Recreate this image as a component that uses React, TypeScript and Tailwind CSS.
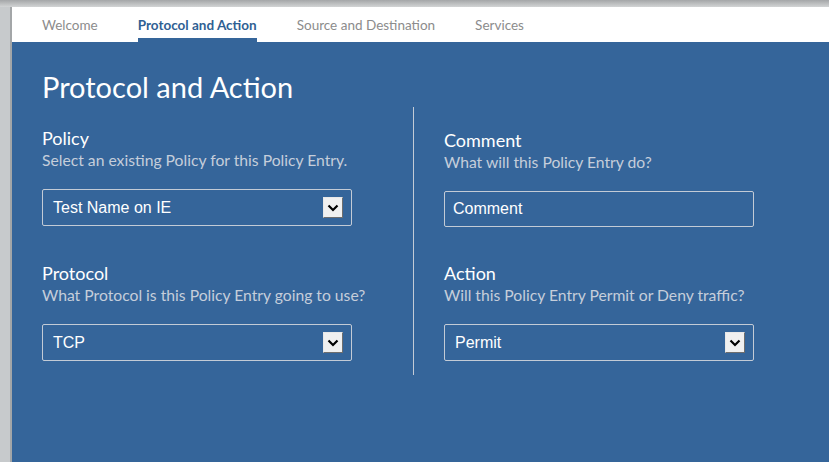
import React from "react";

const Arrow = () => (
    <div className="flex w-[20px] h-[21px] items-center justify-center bg-[#f0f0f0] border border-t-[#e8e8e8] border-l-[#e8e8e8] border-r-[#6e6e6e] border-b-[#6e6e6e]">
        <svg width="12" height="8" viewBox="0 0 12 8">
            <path d="M1.5 1.5 L6 6 L10.5 1.5" fill="none" stroke="#000" strokeWidth="2.2" />
        </svg>
    </div>
);

const Select = ({ value }: { value: string }) => (
    <div className="flex w-[310px] h-[37px] items-center justify-between pl-[10px] pr-[8px] border border-[#c3cbd6] rounded-[2px] text-white text-[16px] font-['Liberation_Sans',sans-serif]">
        <span>{value}</span>
        <Arrow />
    </div>
);

const Input = ({ value }: { value: string }) => (
    <div className="flex w-[310px] h-[36px] items-center pl-[8px] border border-[#c3cbd6] rounded-[2px] text-white text-[16px] font-['Liberation_Sans',sans-serif]">
        <span>{value}</span>
    </div>
);

const Field = ({ label, hint, children }: { label: string; hint: string; children: React.ReactNode }) => (
    <div className="flex flex-col">
        <span className="text-white text-[18px] leading-[24px]">{label}</span>
        <span className="text-[#c5cedb] text-[15.7px] leading-[20px]">{hint}</span>
        <div className="flex mt-[19px]">{children}</div>
    </div>
);

export default function App() {
    const tabs = ["Welcome", "Protocol and Action", "Source and Destination", "Services"];
    return (
        <div className="flex flex-col w-[829px] h-[462px] overflow-hidden bg-[#c7cacc] font-['Lato',sans-serif]">
            <div className="h-[7px] bg-gradient-to-b from-[#a4a6a8] to-[#d2d4d5]" />
            <div className="flex flex-1">
                <div className="w-[12px] bg-[#c7cacc] border-r-2 border-[#a3a6a8]" />
                <div className="flex flex-col flex-1">
                    <div className="flex h-[35px] bg-white pl-[30px] gap-[40px]">
                        {tabs.map((t, i) => (
                            <div
                                key={t}
                                className={
                                    i === 1
                                        ? "flex items-center h-full border-b-[4px] border-[#35659a] pt-[6px] text-[13.5px] font-bold text-[#2f5f93]"
                                        : "flex items-center h-full pt-[2px] text-[13.5px] text-[#8c8c8c]"
                                }
                            >
                                {t}
                            </div>
                        ))}
                    </div>
                    <div className="flex flex-col flex-1 bg-[#35659a] pl-[30px]">
                        <h1 className="text-white text-[29px] leading-[36px] pt-[27px]">Protocol and Action</h1>
                        <div className="flex h-[268px] mt-[2px]">
                            <div className="flex flex-col w-[371px] pt-[19px] gap-[35px]">
                                <Field label="Policy" hint="Select an existing Policy for this Policy Entry.">
                                    <Select value="Test Name on IE" />
                                </Field>
                                <Field label="Protocol" hint="What Protocol is this Policy Entry going to use?">
                                    <Select value="TCP" />
                                </Field>
                            </div>
                            <div className="w-px bg-[#c3cbd6]" />
                            <div className="flex flex-col pl-[30px] pt-[21px] gap-[34px]">
                                <Field label="Comment" hint="What will this Policy Entry do?">
                                    <Input value="Comment" />
                                </Field>
                                <Field label="Action" hint="Will this Policy Entry Permit or Deny traffic?">
                                    <Select value="Permit" />
                                </Field>
                            </div>
                        </div>
                    </div>
                </div>
            </div>
        </div>
    );
}
